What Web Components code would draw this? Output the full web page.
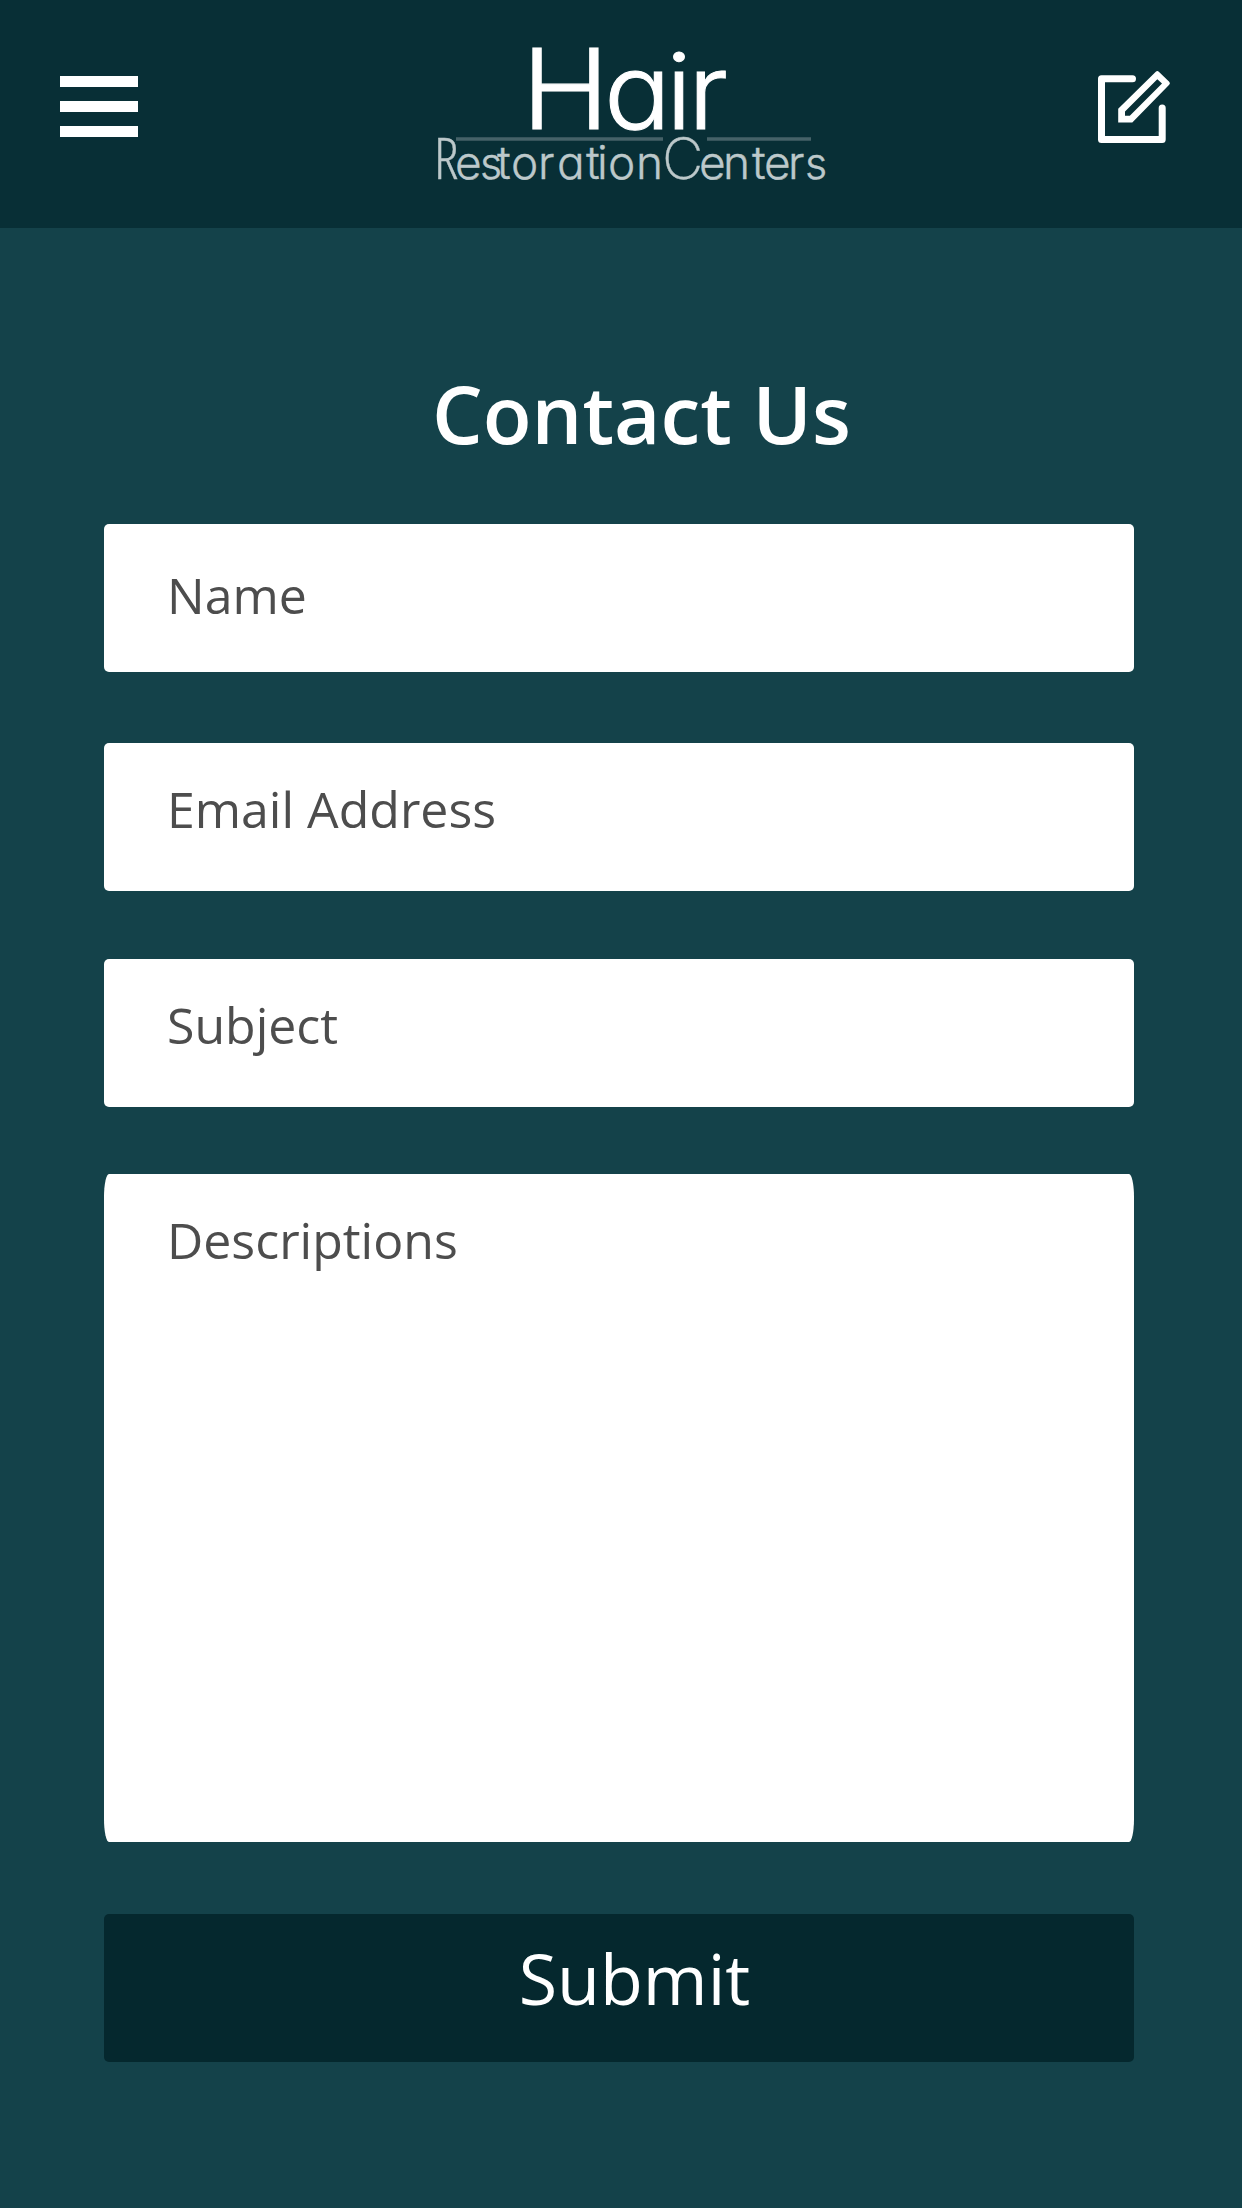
<!DOCTYPE html>
<html lang="en">
<head>
<meta charset="utf-8">
<title>Contact Us</title>
<style>
html,body{margin:0;padding:0}
body{background:#14424a;font-family:"Open Sans","Liberation Sans",sans-serif}
</style>
</head>
<body>
<contact-page></contact-page>
<script>
class BaseElement extends HTMLElement {
  connectedCallback() {
    if (this.shadowRoot) return;
    this.attachShadow({mode: 'open'}).innerHTML = this.constructor.markup;
  }
}

class MenuButton extends BaseElement {
  static markup = `<style>
    :host{display:flex;flex-direction:column;gap:14px;width:78px}
    i{height:11px;background:#fff}
  </style><i></i><i></i><i></i>`;
}
customElements.define('menu-button', MenuButton);

class BrandLogo extends BaseElement {
  static markup = `<style>
    :host{display:block;width:387px;height:133px}
    svg{display:block;overflow:visible}
    text{font-family:Inter,"Liberation Sans",sans-serif;font-feature-settings:"cv11" 1;fill:#fff}
    .top{font-size:104px;font-weight:350;stroke:#fff;stroke-width:1}
    .top .cap{font-size:111px}
    .sub{font-size:46px;font-weight:300;fill:#bcc8ca;stroke:#bcc8ca;stroke-width:.35}
    .sub .cap{font-size:57px;font-weight:250}
    .sub .r{font-family:"Open Sans",sans-serif;font-size:57px;font-weight:300;font-stretch:75%}
    .sub .s{font-size:43px}
  </style>
  <svg width="387" height="133" viewBox="438 47 387 133">
    <path d="M456 139H663M707 139H811" stroke="#456268" stroke-width="3.4"/>
    <text class="top" transform="scale(1.07 1)" x="487.5 564.5 622.5 643" y="129"><tspan class="cap">H</tspan>air</text>
    <text class="sub" x="434 455 480 497 511 538 557 586 597 608 636 662 699 723 752 764 788 805" y="179"><tspan class="r">R</tspan>e<tspan class="s">s</tspan>toration<tspan class="cap">C</tspan>enter<tspan class="s">s</tspan></text>
  </svg>`;
}
customElements.define('brand-logo', BrandLogo);

class ComposeButton extends BaseElement {
  static markup = `<style>:host{display:block;width:74px;height:74px}svg{display:block}</style>
  <svg width="74" height="74" viewBox="1097 70 74 74">
    <path d="M1132.5 78.8H1101.5V139.6H1162.2V108" fill="none" stroke="#fff" stroke-width="7" stroke-linecap="round" stroke-linejoin="round"/>
    <path fill="#fff" fill-rule="evenodd" d="M1155.8 71.8Q1157.3 70.3 1158.8 71.8L1169.2 81.8Q1170.7 83.3 1169.2 84.8L1132.3 122.5H1118.2V108.7ZM1157.3 79.2L1125 111.4V115.7H1129.8L1162 83.5Z"/>
  </svg>`;
}
customElements.define('compose-button', ComposeButton);

class AppHeader extends BaseElement {
  static markup = `<style>
    :host{display:flex;align-items:flex-start;box-sizing:border-box;height:228px;padding:47px 71px 0 60px;background:#082f36}
    menu-button{margin-top:29px}
    brand-logo{margin:0 auto 0 300px}
    compose-button{margin-top:23px}
  </style><menu-button></menu-button><brand-logo></brand-logo><compose-button></compose-button>`;
}
customElements.define('app-header', AppHeader);

class FormField extends BaseElement {
  static markup = `<style>
    :host{display:block;box-sizing:border-box;height:148px;padding:32px 63px 0;border-radius:5px;background:#fff;color:#4d4d4d;font-size:50px;line-height:68px}
    :host([first]){padding-top:37px}
    :host([multiline]){height:668px;border-radius:5px / 23px}
  </style><slot></slot>`;
}
customElements.define('form-field', FormField);

class SubmitButton extends BaseElement {
  static markup = `<style>
    :host{display:flex;justify-content:center;box-sizing:border-box;height:148px;padding:16px 0 0 31px;border-radius:5px;background:#05282e;color:#fff;font-size:70px;line-height:96px}
  </style><slot></slot>`;
}
customElements.define('submit-button', SubmitButton);

class ContactPage extends BaseElement {
  static markup = `<style>
    :host{display:flex;flex-direction:column;min-height:2208px;background:#14424a}
    main{display:flex;flex-direction:column;width:1030px;margin-left:104px}
    h1{margin:130px 0 56px;padding-left:45px;text-align:center;color:#fff;font-size:80px;font-weight:600;line-height:110px}
    .email{margin-top:71px}
    .subject{margin-top:68px}
    .desc{margin-top:67px}
    submit-button{margin-top:72px}
  </style>
  <app-header></app-header>
  <main>
    <h1>Contact Us</h1>
    <form-field first>Name</form-field>
    <form-field class="email">Email Address</form-field>
    <form-field class="subject">Subject</form-field>
    <form-field class="desc" multiline>Descriptions</form-field>
    <submit-button>Submit</submit-button>
  </main>`;
}
customElements.define('contact-page', ContactPage);
</script>
</body>
</html>
